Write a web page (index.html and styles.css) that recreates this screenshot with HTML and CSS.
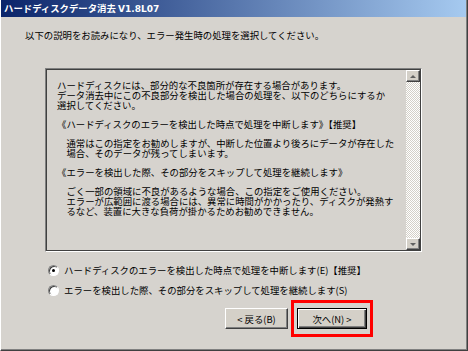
FILE: index.html
```html
<!DOCTYPE html>
<html lang="ja">
<head>
<meta charset="utf-8">
<title>ハードディスクデータ消去</title>
<link rel="stylesheet" href="styles.css">
</head>
<body>
<div class="window">
  <div class="titlebar"><span class="title">ハードディスクデータ消去 <span class="ver">V1.8L07</span></span></div>
  <div class="content">
    <p class="intro">以下の説明をお読みになり、エラー発生時の処理を選択してください。</p>
    <div class="box">
      <div class="box-text">
        <p>ハードディスクには、部分的な不良箇所が存在する場合があります。<br>データ消去中にこの不良部分を検出した場合の処理を、以下のどちらにするか<br>選択してください。</p>
        <p>《ハードディスクのエラーを検出した時点で処理を中断します》【推奨】</p>
        <p class="indent">通常はこの指定をお勧めしますが、中断した位置より後ろにデータが存在した<br>場合、そのデータが残ってしまいます。</p>
        <p>《エラーを検出した際、その部分をスキップして処理を継続します》</p>
        <p class="indent">ごく一部の領域に不良があるような場合、この指定をご使用ください。<br>エラーが広範囲に渡る場合には、異常に時間がかかったり、ディスクが発熱す<br>るなど、装置に大きな負荷が掛かるためお勧めできません。</p>
      </div>
      <div class="scrollbar">
        <div class="sb-btn"><span class="arrow-up"></span></div>
        <div class="sb-track"></div>
        <div class="sb-btn"><span class="arrow-down"></span></div>
      </div>
    </div>
    <div class="options">
      <label class="option"><span class="radio checked"></span><span>ハードディスクのエラーを検出した時点で処理を中断します(E)【推奨】</span></label>
      <label class="option"><span class="radio"></span><span>エラーを検出した際、その部分をスキップして処理を継続します(S)</span></label>
    </div>
    <div class="buttons">
      <div class="btn">&lt; 戻る(B)</div>
      <div class="btn default">次へ(N) &gt;<span class="highlight"></span></div>
    </div>
  </div>
</div>
</body>
</html>
```
FILE: styles.css
```css
* { box-sizing: border-box; }
html, body { margin: 0; padding: 0; }
body {
  background: #d4d0c8;
  font-family: "Noto Sans CJK JP", "Liberation Sans", sans-serif;
  font-size: 9.4px;
  color: #000;
}
.window {
  width: 468px;
  height: 351px;
  background: #d6d3ce;
  border-left: 1px solid #ffffff;
  border-right: 1px solid #404040;
  border-bottom: 1px solid #404040;
  box-shadow: inset -1px -1px 0 #808080;
  display: flex;
  flex-direction: column;
}
.titlebar {
  height: 17px;
  margin-right: 1px;
  background: linear-gradient(to right, #0a246a, #a6caf0);
  display: flex;
  align-items: center;
  padding-left: 3px;
}
.title {
  color: #fff;
  font-family: "Noto Sans CJK JP", sans-serif;
  font-weight: bold;
  font-size: 9.4px;
  line-height: 12px;
  white-space: nowrap;
}
.ver {
  font-family: "DejaVu Sans", "Liberation Sans", sans-serif;
  font-size: 9px;
}
.content {
  display: flex;
  flex-direction: column;
  flex: 1;
}
.intro {
  margin: 12px 0 0 24px;
  line-height: 12px;
  white-space: nowrap;
}
.box {
  margin: 27px 0 0 44px;
  width: 377px;
  height: 184px;
  border: 1px solid;
  border-color: #808080 #ffffff #ffffff #808080;
  box-shadow: inset 1px 1px 0 #404040, inset -1px -1px 0 #404040;
  display: flex;
  padding: 1px;
}
.box-text {
  flex: 1;
  padding: 10px 0 0 10px;
  white-space: nowrap;
  line-height: 10px;
}
.box-text p { margin: 0 0 9px 0; }
.box-text p.indent { padding-left: 9.4px; }
.scrollbar {
  width: 14px;
  display: flex;
  flex-direction: column;
}
.sb-btn {
  height: 12px;
  background: #d4d0c8;
  border: 1px solid;
  border-color: #ffffff #404040 #404040 #ffffff;
  box-shadow: inset -1px -1px 0 #808080;
  display: flex;
  align-items: center;
  justify-content: center;
}
.sb-track {
  flex: 1;
  background-color: #e6e3de;
  background-image: repeating-conic-gradient(#ffffff 0 25%, #d4d0c8 0 50%);
  background-size: 2px 2px;
}
.arrow-up, .arrow-down {
  width: 0; height: 0;
  border-left: 3px solid transparent;
  border-right: 3px solid transparent;
}
.arrow-up { border-bottom: 3px solid #606060; }
.arrow-down { border-top: 3px solid #606060; }
.options {
  display: flex;
  flex-direction: column;
  gap: 6px;
  margin: 11px 0 0 47px;
}
.option {
  display: flex;
  align-items: center;
  gap: 5px;
  height: 14px;
  line-height: 14px;
  white-space: nowrap;
}
.radio {
  width: 11px;
  height: 11px;
  border-radius: 50%;
  background: #fff;
  border: 1px solid;
  border-color: #808080 #ffffff #ffffff #808080;
  box-shadow: inset 1px 1px 0 #404040;
  display: flex;
  align-items: center;
  justify-content: center;
}
.radio.checked::after {
  content: "";
  width: 3px;
  height: 3px;
  border-radius: 50%;
  background: #000;
}
.buttons {
  display: flex;
  justify-content: flex-end;
  gap: 9px;
  margin: 11px 100px 0 0;
}
.btn {
  position: relative;
  width: 63px;
  height: 21px;
  background: #d4d0c8;
  border: 1px solid;
  border-color: #ffffff #404040 #404040 #ffffff;
  box-shadow: inset -1px -1px 0 #808080;
  display: flex;
  align-items: center;
  justify-content: center;
  white-space: nowrap;
  line-height: 12px;
}
.btn.default {
  width: 70px;
  border: 1px solid #000;
  box-shadow: inset 1px 1px 0 #ffffff, inset -1px -1px 0 #404040, inset -2px -2px 0 #808080;
}
.highlight {
  position: absolute;
  left: -7px;
  right: -7px;
  top: -9px;
  bottom: -9px;
  border: 3px solid #ff0000;
}
```
